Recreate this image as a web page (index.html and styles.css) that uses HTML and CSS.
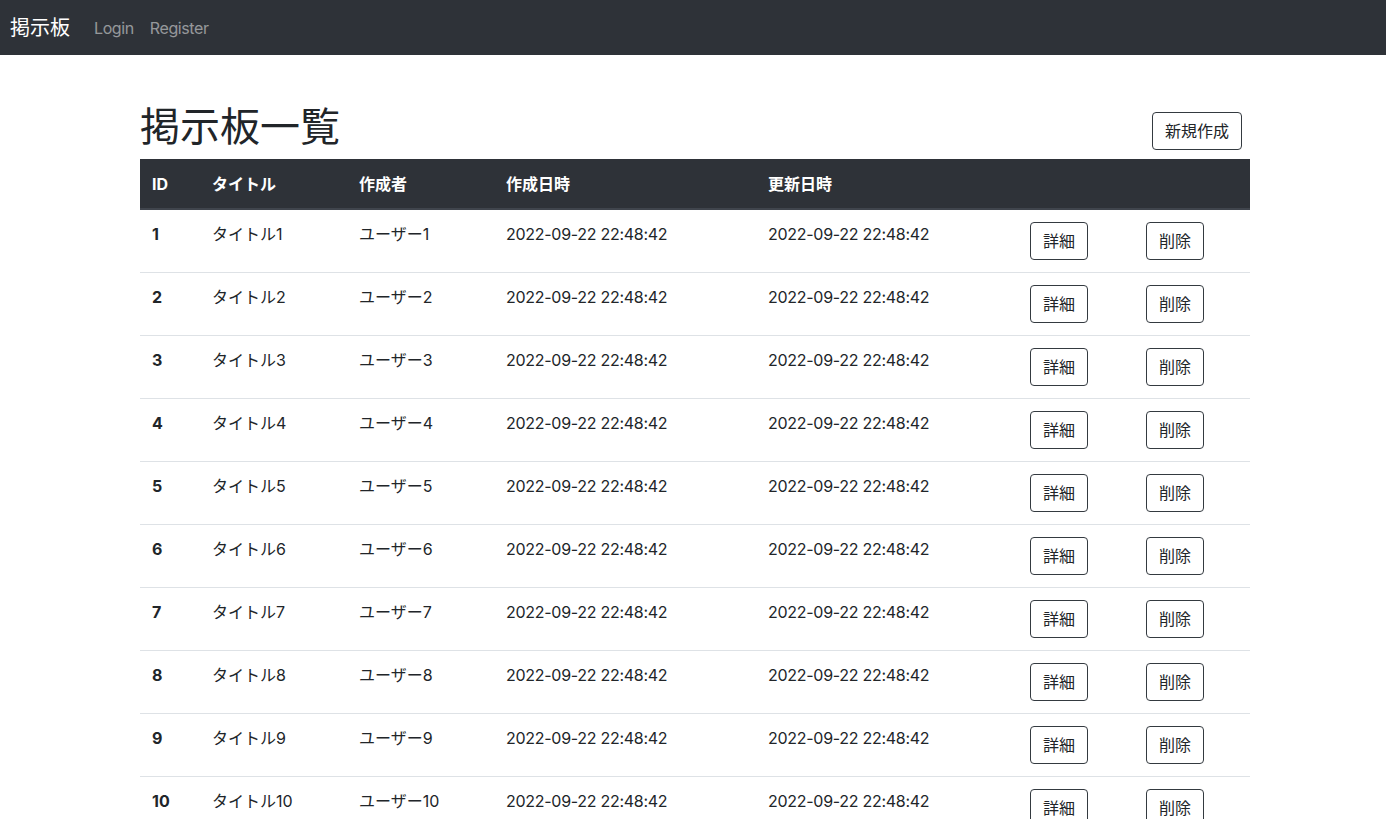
FILE: index.html
```html
<!DOCTYPE html>
<html lang="ja">
<head>
<meta charset="utf-8">
<title>掲示板一覧</title>
<link rel="stylesheet" href="styles.css">
</head>
<body>
<nav class="navbar">
  <a class="brand" href="#">掲示板</a>
  <a class="nav-link" href="#">Login</a>
  <a class="nav-link" href="#">Register</a>
</nav>
<main class="container">
  <div class="page-head">
    <h1 class="title">掲示板一覧</h1>
    <a class="btn btn-new" href="#">新規作成</a>
  </div>
  <table class="table">
    <thead>
      <tr>
        <th class="c-id">ID</th>
        <th class="c-title">タイトル</th>
        <th class="c-user">作成者</th>
        <th class="c-date">作成日時</th>
        <th class="c-date">更新日時</th>
        <th class="c-btn"></th>
        <th class="c-btn"></th>
      </tr>
    </thead>
    <tbody>
      <tr><th>1</th><td>タイトル1</td><td>ユーザー1</td><td class="date">2022-09-22 22:48:42</td><td class="date">2022-09-22 22:48:42</td><td><a class="btn" href="#">詳細</a></td><td><a class="btn" href="#">削除</a></td></tr>
      <tr><th>2</th><td>タイトル2</td><td>ユーザー2</td><td class="date">2022-09-22 22:48:42</td><td class="date">2022-09-22 22:48:42</td><td><a class="btn" href="#">詳細</a></td><td><a class="btn" href="#">削除</a></td></tr>
      <tr><th>3</th><td>タイトル3</td><td>ユーザー3</td><td class="date">2022-09-22 22:48:42</td><td class="date">2022-09-22 22:48:42</td><td><a class="btn" href="#">詳細</a></td><td><a class="btn" href="#">削除</a></td></tr>
      <tr><th>4</th><td>タイトル4</td><td>ユーザー4</td><td class="date">2022-09-22 22:48:42</td><td class="date">2022-09-22 22:48:42</td><td><a class="btn" href="#">詳細</a></td><td><a class="btn" href="#">削除</a></td></tr>
      <tr><th>5</th><td>タイトル5</td><td>ユーザー5</td><td class="date">2022-09-22 22:48:42</td><td class="date">2022-09-22 22:48:42</td><td><a class="btn" href="#">詳細</a></td><td><a class="btn" href="#">削除</a></td></tr>
      <tr><th>6</th><td>タイトル6</td><td>ユーザー6</td><td class="date">2022-09-22 22:48:42</td><td class="date">2022-09-22 22:48:42</td><td><a class="btn" href="#">詳細</a></td><td><a class="btn" href="#">削除</a></td></tr>
      <tr><th>7</th><td>タイトル7</td><td>ユーザー7</td><td class="date">2022-09-22 22:48:42</td><td class="date">2022-09-22 22:48:42</td><td><a class="btn" href="#">詳細</a></td><td><a class="btn" href="#">削除</a></td></tr>
      <tr><th>8</th><td>タイトル8</td><td>ユーザー8</td><td class="date">2022-09-22 22:48:42</td><td class="date">2022-09-22 22:48:42</td><td><a class="btn" href="#">詳細</a></td><td><a class="btn" href="#">削除</a></td></tr>
      <tr><th>9</th><td>タイトル9</td><td>ユーザー9</td><td class="date">2022-09-22 22:48:42</td><td class="date">2022-09-22 22:48:42</td><td><a class="btn" href="#">詳細</a></td><td><a class="btn" href="#">削除</a></td></tr>
      <tr><th>10</th><td>タイトル10</td><td>ユーザー10</td><td class="date">2022-09-22 22:48:42</td><td class="date">2022-09-22 22:48:42</td><td><a class="btn" href="#">詳細</a></td><td><a class="btn" href="#">削除</a></td></tr>
    </tbody>
  </table>
</main>
</body>
</html>
```
FILE: styles.css
```css
* { box-sizing: border-box; }
html, body { margin: 0; padding: 0; }
body {
  font-family: Inter, "Noto Sans CJK JP", sans-serif;
  font-size: 16px;
  line-height: 24px;
  color: #212529;
  background: #fff;
}
a { text-decoration: none; }

.navbar {
  height: 55px;
  background: #2e3238;
  display: flex;
  align-items: center;
  padding: 0 10px;
}
.brand {
  color: #fff;
  font-size: 20px;
  line-height: 30px;
  margin-right: 16px;
}
.nav-link {
  color: rgba(255, 255, 255, 0.5);
  padding: 0 8px;
  letter-spacing: -0.4px;
}

.container {
  width: 1110px;
  margin: 48px 0 0 140px;
}
.page-head {
  display: flex;
  justify-content: space-between;
  align-items: flex-end;
  margin-bottom: 8px;
}
.title {
  margin: 0;
  font-size: 40px;
  line-height: 48px;
  font-weight: 400;
}
.btn {
  display: inline-block;
  border: 1px solid #343a40;
  border-radius: 4px;
  padding: 6px 12px;
  color: #212529;
  font-size: 16px;
  line-height: 24px;
}
.btn-new { margin: 0 8px 1px 0; }

.table {
  width: 1110px;
  border-collapse: collapse;
  table-layout: fixed;
}
.table th, .table td {
  padding: 12px;
  text-align: left;
  vertical-align: top;
}
.table thead th {
  background: #2e3238;
  color: #fff;
  font-weight: 700;
  border-top: 1px solid #2e3238;
  border-bottom: 2px solid #40454d;
}
.table tbody tr { border-bottom: 1px solid #dee2e6; }
.table tbody th { font-weight: 700; }
.table .date { letter-spacing: -0.28px; }
.c-id { width: 60px; }
.c-title { width: 147px; }
.c-user { width: 147px; }
.c-date { width: 262px; }
.c-btn { width: 116px; }
```
